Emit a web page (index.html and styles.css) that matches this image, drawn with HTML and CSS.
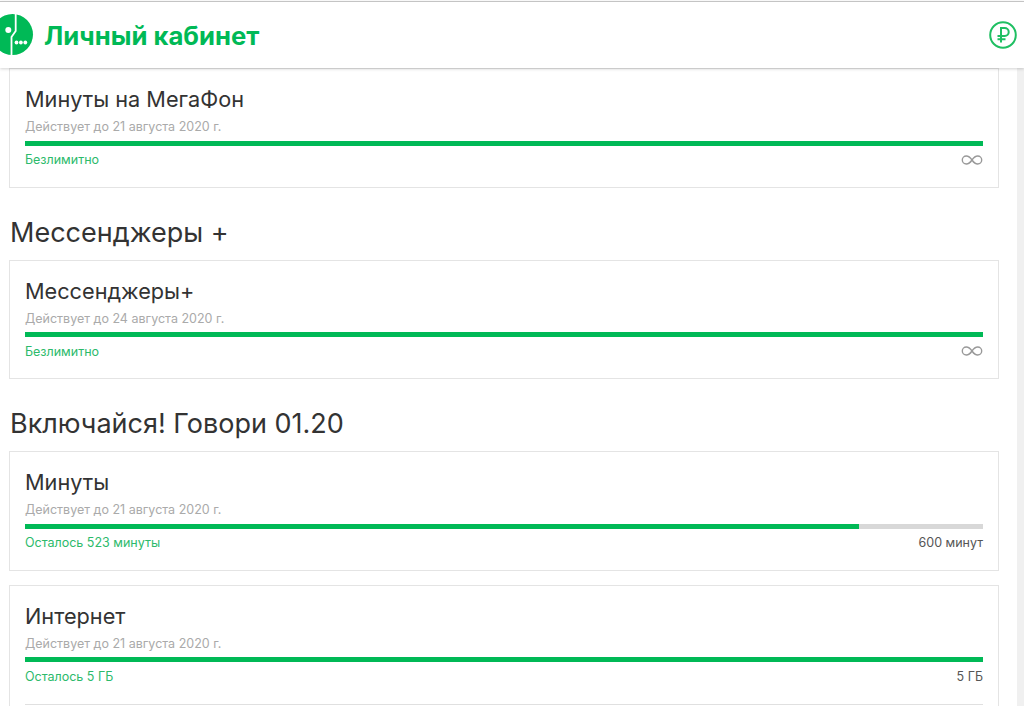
FILE: index.html
```html
<!DOCTYPE html>
<html>
<head>
    <meta charset="UTF-8">
    <title>Личный кабинет</title>
    <link rel="stylesheet" href="styles.css">
</head>
<body>
    <header class="header">
        <div class="brand">
            <svg class="logo" width="34" height="42" viewBox="0 0 34 42">
                <circle cx="12.5" cy="20.5" r="20.5" fill="#00b956"/>
                <path d="M15.700 0V17L11.500 23V41" fill="none" stroke="#fff" stroke-width="1.8"/>
                <circle cx="8.300" cy="16" r="3" fill="#fff"/>
                <circle cx="16.500" cy="28.500" r="1.900" fill="#fff"/>
                <circle cx="20.900" cy="28.500" r="1.900" fill="#fff"/>
                <circle cx="25.300" cy="28.500" r="1.900" fill="#fff"/>
            </svg>
            <span class="brand-name">Личный кабинет</span>
        </div>
        <svg class="balance-icon" width="28" height="28" viewBox="0 0 28 28">
            <circle cx="14" cy="14" r="12.8" fill="none" stroke="#1fbf62" stroke-width="2"/>
            <path d="M12 21.500V7H15.700A4 4 0 0 1 15.700 15H8.500M8.500 18.300H16.500" fill="none" stroke="#1fbf62" stroke-width="2"/>
        </svg>
    </header>

    <div class="page">
        <main class="content">
            <section class="card">
                <h3 class="card-title">Минуты на МегаФон</h3>
                <div class="card-date">Действует до 21 августа 2020 г.</div>
                <div class="bar"><div class="bar-fill" style="width: 100%"></div></div>
                <div class="card-row">
                    <span class="left-text">Безлимитно</span>
                    <svg class="infinity" width="22" height="10" viewBox="0 0 22 10">
                        <path d="M11 5C9 2 7.500 1 5.300 1A4 4 0 0 0 5.300 9C7.500 9 9 8 11 5C13 2 14.500 1 16.700 1A4 4 0 0 1 16.700 9C14.500 9 13 8 11 5Z" fill="none" stroke="#999" stroke-width="1.4"/>
                    </svg>
                </div>
            </section>

            <h2 class="group-title">Мессенджеры +</h2>
            <section class="card">
                <h3 class="card-title">Мессенджеры+</h3>
                <div class="card-date">Действует до 24 августа 2020 г.</div>
                <div class="bar"><div class="bar-fill" style="width: 100%"></div></div>
                <div class="card-row">
                    <span class="left-text">Безлимитно</span>
                    <svg class="infinity" width="22" height="10" viewBox="0 0 22 10">
                        <path d="M11 5C9 2 7.500 1 5.300 1A4 4 0 0 0 5.300 9C7.500 9 9 8 11 5C13 2 14.500 1 16.700 1A4 4 0 0 1 16.700 9C14.500 9 13 8 11 5Z" fill="none" stroke="#999" stroke-width="1.4"/>
                    </svg>
                </div>
            </section>

            <h2 class="group-title">Включайся! Говори 01.20</h2>
            <section class="card">
                <h3 class="card-title">Минуты</h3>
                <div class="card-date">Действует до 21 августа 2020 г.</div>
                <div class="bar"><div class="bar-fill" style="width: 87.1%"></div></div>
                <div class="card-row">
                    <span class="left-text">Осталось 523 минуты</span>
                    <span class="right-text">600 минут</span>
                </div>
            </section>

            <section class="card card-long">
                <h3 class="card-title">Интернет</h3>
                <div class="card-date">Действует до 21 августа 2020 г.</div>
                <div class="bar"><div class="bar-fill" style="width: 100%"></div></div>
                <div class="card-row">
                    <span class="left-text">Осталось 5 ГБ</span>
                    <span class="right-text">5 ГБ</span>
                </div>
                <div class="divider"></div>
            </section>
        </main>
        <div class="scroll-track"></div>
    </div>
</body>
</html>
```

FILE: styles.css
```css
html, body {
    height: 100%;
}

body {
    margin: 0;
    padding-top: 1px;
    box-sizing: border-box;
    overflow: hidden;
    display: flex;
    flex-direction: column;
    background-color: #fff;
    font-family: Inter, "Noto Sans", sans-serif;
    color: #333;
}

.header {
    flex: none;
    height: 67px;
    box-sizing: border-box;
    border-top: 1px solid #c4c4c4;
    display: flex;
    justify-content: space-between;
    align-items: center;
    padding-right: 7px;
    background-color: #fff;
    box-shadow: 0 1px 3px rgba(0, 0, 0, 0.18);
    position: relative;
    z-index: 1;
}

.brand {
    display: flex;
    align-items: center;
    gap: 10px;
}

.logo {
    display: block;
}

.brand-name {
    margin-top: 1px;
    color: #00b956;
    font-size: 25.7px;
    font-weight: 700;
}

.page {
    flex: 1;
    min-height: 0;
    display: flex;
    overflow: hidden;
}

.content {
    flex: 1;
    padding: 0.4px 18px 0 9px;
}

.scroll-track {
    flex: none;
    width: 7px;
    background-color: #f0f0f0;
}

.card {
    height: 119.5px;
    box-sizing: border-box;
    border: 1px solid #e4e4e4;
    padding: 15px 15px 0;
    margin-bottom: 14px;
}

.card-long {
    height: 180px;
}

.card-title {
    margin: 0;
    font-size: 21.7px;
    font-weight: 400;
    line-height: 30px;
}

.card-date {
    margin-top: 5px;
    font-size: 12.5px;
    line-height: 16px;
    color: #aaa;
}

.bar {
    height: 5px;
    margin-top: 5.5px;
    background-color: #d8d8d8;
}

.bar-fill {
    height: 100%;
    background-color: #00b956;
}

.card-row {
    display: flex;
    justify-content: space-between;
    align-items: center;
    height: 18px;
    margin-top: 5px;
    font-size: 12.5px;
}

.left-text {
    color: #2cba6b;
}

.right-text {
    color: #555;
}

.divider {
    margin-top: 19px;
    border-top: 1px solid #e0e0e0;
}

.group-title {
    margin: 0;
    box-sizing: border-box;
    height: 58px;
    padding: 11px 0 7px 1px;
    font-size: 27px;
    font-weight: 400;
    line-height: 40px;
}
```
